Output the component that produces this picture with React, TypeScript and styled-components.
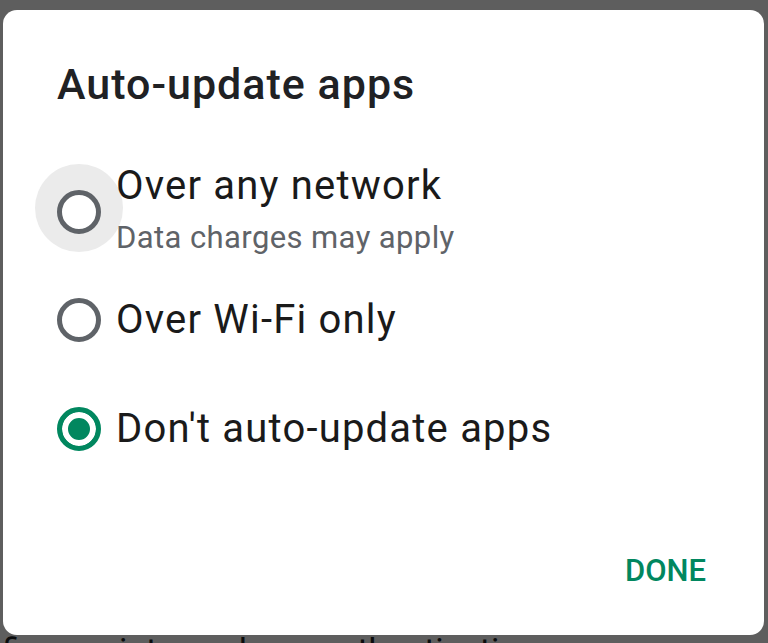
import styled, { createGlobalStyle } from 'styled-components';

const GlobalStyle = createGlobalStyle`
  html, body {
    margin: 0;
    padding: 0;
    height: 100%;
    overflow: hidden;
    background: #ffffff;
  }
  body {
    font-family: Roboto, "Noto Sans", "Liberation Sans", sans-serif;
    -webkit-font-smoothing: antialiased;
  }
`;

// settings page lying under the dialog, only its last line peeks out
const Page = styled.div`
  height: 643px;
  overflow: hidden;
  box-sizing: border-box;
  padding: 625px 0 0 2px;
`;

const PageLine = styled.div`
  font-size: 34px;
  line-height: 50px;
  color: #202124;
  white-space: nowrap;
`;

const Scrim = styled.div`
  position: fixed;
  inset: 0;
  background: rgba(0, 0, 0, 0.63);
  display: flex;
  align-items: flex-start;
  padding: 10px 4px 0 3px;
`;

const Dialog = styled.div`
  position: relative;
  z-index: 0;
  width: 761px;
  height: 625px;
  box-sizing: border-box;
  background: #ffffff;
  border-radius: 14px;
  display: flex;
  flex-direction: column;
  padding: 49px 58px 0 54px;
`;

const Title = styled.h2`
  margin: 0;
  font-size: 43px;
  line-height: 50px;
  font-weight: 500;
  letter-spacing: 1px;
  color: #202124;
`;

const Options = styled.div`
  margin-top: 44px;
  display: flex;
  flex-direction: column;
`;

const Row = styled.label`
  display: flex;
  align-items: center;
  gap: 15px;
  min-height: 109px;
  padding: 10px 0 8px;
  box-sizing: border-box;
  cursor: pointer;
`;

const Radio = styled.span<{ $checked?: boolean; $focused?: boolean; $shift?: number }>`
  position: relative;
  flex: none;
  width: 44px;
  height: 44px;
  box-sizing: border-box;
  border-radius: 50%;
  border: 5px solid ${(p) => (p.$checked ? '#01875f' : '#5f6368')};
  background: ${(p) => (p.$checked ? '#01875f' : '#ffffff')};
  box-shadow: inset 0 0 0 6px #ffffff;
  margin-top: ${(p) => (p.$shift ?? 0) * 2}px;

  &::before {
    content: '';
    display: ${(p) => (p.$focused ? 'block' : 'none')};
    position: absolute;
    z-index: -1;
    width: 88px;
    height: 88px;
    left: -27px;
    top: -31px;
    border-radius: 50%;
    background: #ebebeb;
  }
`;

const Texts = styled.div`
  display: flex;
  flex-direction: column;
  gap: 11px;
`;

const Label = styled.span`
  font-size: 40px;
  line-height: 46px;
  letter-spacing: 1.2px;
  color: #1a1a1a;
`;

const Hint = styled.span`
  font-size: 31px;
  line-height: 36px;
  letter-spacing: 0.4px;
  color: #5f6368;
`;

const Footer = styled.div`
  margin-top: auto;
  display: flex;
  justify-content: flex-end;
  padding-bottom: 44px;
`;

const TextButton = styled.button`
  border: none;
  background: none;
  padding: 0;
  font-family: inherit;
  font-size: 31px;
  line-height: 40px;
  font-weight: 500;
  color: #01875f;
  cursor: pointer;
`;

const options = [
  { label: 'Over any network', hint: 'Data charges may apply', focused: true },
  { label: 'Over Wi-Fi only' },
  { label: "Don't auto-update apps", checked: true },
];

export default function App() {
  return (
    <>
      <GlobalStyle />
      <Page>
        <PageLine>fingerprint, purchase authentication</PageLine>
      </Page>
      <Scrim>
        <Dialog role="dialog">
          <Title>Auto-update apps</Title>
          <Options>
            {options.map((o) => (
              <Row key={o.label}>
                <Radio $checked={o.checked} $focused={o.focused} $shift={o.hint ? 2.5 : 0} />
                <Texts>
                  <Label>{o.label}</Label>
                  {o.hint && <Hint>{o.hint}</Hint>}
                </Texts>
              </Row>
            ))}
          </Options>
          <Footer>
            <TextButton>DONE</TextButton>
          </Footer>
        </Dialog>
      </Scrim>
    </>
  );
}
